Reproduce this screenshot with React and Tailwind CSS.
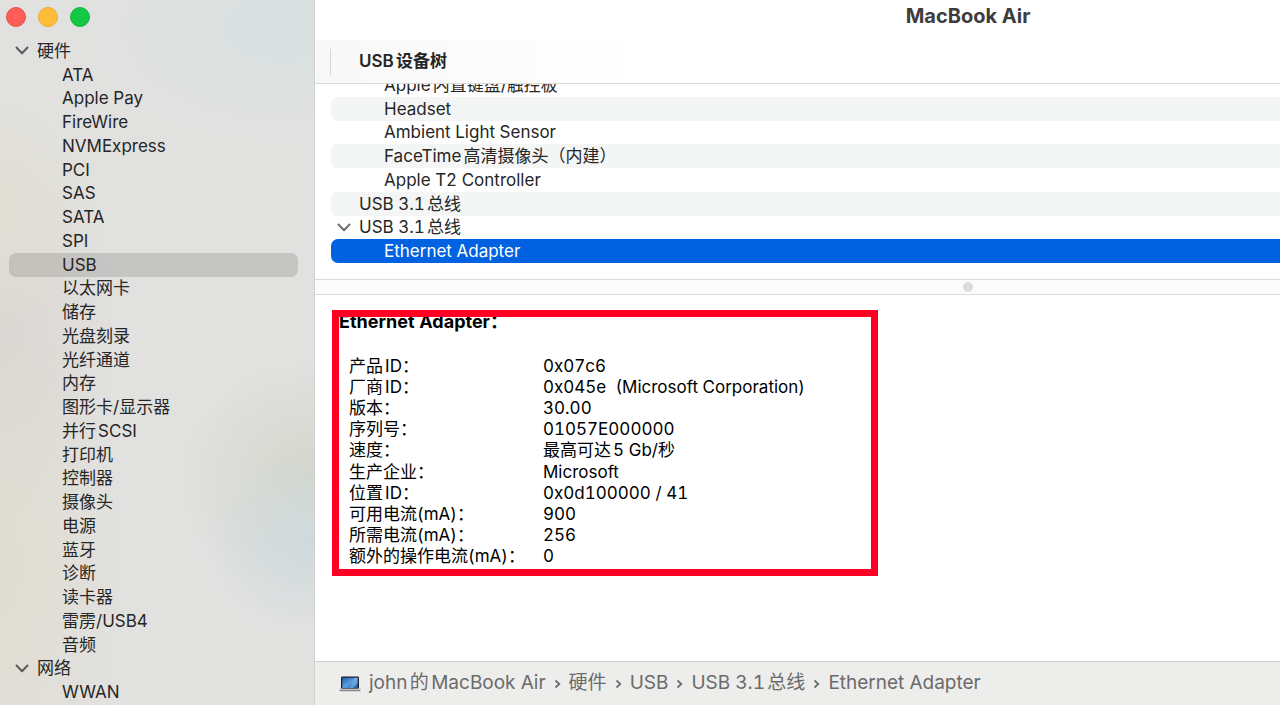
import { useState } from 'react';
import clsx from 'clsx';

const sidebarSections = [
  {
    name: '硬件',
    items: [
      'ATA',
      'Apple Pay',
      'FireWire',
      'NVMExpress',
      'PCI',
      'SAS',
      'SATA',
      'SPI',
      'USB',
      '以太网卡',
      '储存',
      '光盘刻录',
      '光纤通道',
      '内存',
      '图形卡/显示器',
      '并行SCSI',
      '打印机',
      '控制器',
      '摄像头',
      '电源',
      '蓝牙',
      '诊断',
      '读卡器',
      '雷雳/USB4',
      '音频',
    ],
  },
  { name: '网络', items: ['WWAN'] },
];

const devices = [
  { id: 1, name: 'Apple内置键盘/触控板', level: 1 },
  { id: 2, name: 'Headset', level: 1 },
  { id: 3, name: 'Ambient Light Sensor', level: 1 },
  { id: 4, name: 'FaceTime高清摄像头（内建）', level: 1 },
  { id: 5, name: 'Apple T2 Controller', level: 1 },
  { id: 6, name: 'USB 3.1总线', level: 0 },
  { id: 7, name: 'USB 3.1总线', level: 0, expanded: true },
  { id: 8, name: 'Ethernet Adapter', level: 1 },
];

const details = [
  ['产品ID：', '0x07c6'],
  ['厂商ID：', '0x045e  (Microsoft Corporation)'],
  ['版本：', '30.00'],
  ['序列号：', '01057E000000'],
  ['速度：', '最高可达5 Gb/秒'],
  ['生产企业：', 'Microsoft'],
  ['位置ID：', '0x0d100000 / 41'],
  ['可用电流(mA)：', '900'],
  ['所需电流(mA)：', '256'],
  ['额外的操作电流(mA)：', '0'],
];

const breadcrumb = ['john的MacBook Air', '硬件', 'USB', 'USB 3.1总线', 'Ethernet Adapter'];

const Chevron = ({ className }) => (
  <svg viewBox="0 0 14 9" fill="none" className={clsx('h-[9px] w-[14px] shrink-0', className)}>
    <path d="M1.500 1.500 7 7.200l5.500-5.700" stroke="currentColor" strokeWidth="2" strokeLinecap="round" strokeLinejoin="round" />
  </svg>
);

const LaptopIcon = () => (
  <svg viewBox="0 0 22 16" className="h-4 w-[22px] shrink-0">
    <defs>
      <linearGradient id="screen" x1="0" y1="0" x2="1" y2="1">
        <stop offset="0" stopColor="#1d5fae" />
        <stop offset="0.5" stopColor="#5b9fdc" />
        <stop offset="1" stopColor="#1c58a4" />
      </linearGradient>
    </defs>
    <rect x="2" y="0.500" width="18" height="12.500" rx="1.200" fill="#1b2530" />
    <rect x="3.300" y="1.800" width="15.400" height="10.200" fill="url(#screen)" />
    <path d="M11 12 15.500 1.800h3.200V7L14 12Z" fill="#8fc3ee" opacity="0.450" />
    <path d="M0 12.800h22v1.200q-.6 1.200-2 1.200H2Q.6 15.200 0 14Z" fill="#a9adb1" />
    <path d="M0 12.800h22v.8H0Z" fill="#d8dadc" />
    <path d="M1 14.600h20" stroke="#6d7073" strokeWidth="0.700" />
  </svg>
);

const Sidebar = ({ selected, onSelect }) => (
  <aside className="flex w-[315px] shrink-0 flex-col border-r border-[#d2d2d1] bg-[#e1e1e0] bg-[radial-gradient(ellipse_190px_110px_at_90%_4%,#d8e0e0_0%,transparent_100%),radial-gradient(ellipse_110px_90px_at_100%_77%,#cfdadd_0%,transparent_100%),radial-gradient(ellipse_130px_120px_at_98%_68%,#d3d6cc_0%,transparent_100%),radial-gradient(ellipse_110px_130px_at_0%_29%,#e1dfd4_0%,transparent_100%),radial-gradient(ellipse_120px_200px_at_0%_46%,#dbd6d2_0%,transparent_100%),radial-gradient(ellipse_130px_300px_at_0%_80%,#e0dccf_0%,transparent_100%)] pb-px">
    <div className="flex h-[39px] gap-3 px-1.5 pt-[7px]">
      <button aria-label="关闭" className="size-5 rounded-full border border-[#e8514a] bg-[#fe5e57]" />
      <button aria-label="最小化" className="size-5 rounded-full border border-[#eaab36] bg-[#febc39]" />
      <button aria-label="缩放" className="size-5 rounded-full border border-[#14b83c] bg-[#13c845]" />
    </div>
    <nav className="grid flex-1 auto-rows-fr pr-4 pl-[9px]">
      {sidebarSections.map((section) => [
        <button key={section.name} className="flex items-center gap-2 pl-1.5 leading-5">
          <Chevron className="text-[#5a5a5a]" />
          {section.name}
        </button>,
        ...section.items.map((item) => (
          <button
            key={item}
            onClick={() => onSelect(item)}
            className={clsx('rounded-[7px] pl-[53px] text-left leading-5', item === selected && 'bg-black/12')}
          >
            {item}
          </button>
        )),
      ])}
    </nav>
  </aside>
);

const DeviceTree = ({ selected, onSelect }) => (
  <div className="flex h-[195px] shrink-0 flex-col justify-end overflow-hidden pb-4 pl-4 tabular-nums">
    <div className="grid h-[190px] shrink-0 auto-rows-fr">
      {devices.map((device, i) => (
        <button
          key={device.id}
          onClick={() => onSelect(device.id)}
          className={clsx(
            'flex items-center rounded-l-[7px] leading-5',
            device.level === 1 ? 'pl-[53px]' : 'pl-1.5',
            device.id === selected ? 'bg-[#0062e0] text-white' : i % 2 === 1 && 'bg-[#f4f5f5]'
          )}
        >
          {device.level === 0 && (
            <span className="flex w-[22px]">{device.expanded && <Chevron className="text-[#6e6e6e]" />}</span>
          )}
          {device.name}
        </button>
      ))}
    </div>
  </div>
);

const DeviceDetails = () => (
  <section className="flex-1 px-[17px] pt-[15px]">
    <div className="relative w-[546px] px-[7px] pb-[9px] text-black tabular-nums">
      <h2 className="text-lg font-bold leading-6">Ethernet Adapter：</h2>
      <table className="mt-[21px] h-[212px] w-full">
        <tbody>
          {details.map(([label, value]) => (
            <tr key={label}>
              <th scope="row" className="w-[204px] p-0 pl-2.5 text-left font-normal leading-5">{label}</th>
              <td className="whitespace-pre p-0 leading-5">{value}</td>
            </tr>
          ))}
        </tbody>
      </table>
      {/* highlight frame lies over the text */}
      <div className="pointer-events-none absolute inset-0 border-[7px] border-[#fe0023]" />
    </div>
  </section>
);

const PathBar = () => (
  <footer className="flex h-11 shrink-0 items-center gap-2 border-t border-[#cfcfcd] bg-[#ededec] pl-6 text-[19px] text-[#6b6b6b] tabular-nums">
    <LaptopIcon />
    <ol className="flex items-center gap-2">
      {breadcrumb.map((crumb, i) => (
        <li key={crumb} className="flex items-center gap-2">
          {i > 0 && (
            <svg viewBox="0 0 7 10" fill="none" className="h-2.5 w-[7px]">
              <path d="m1.500 1.500 3.800 3.500-3.800 3.500" stroke="currentColor" strokeWidth="1.700" />
            </svg>
          )}
          <button>{crumb}</button>
        </li>
      ))}
    </ol>
  </footer>
);

const App = () => {
  const [category, setCategory] = useState('USB');
  const [device, setDevice] = useState(8);

  return (
    <div
      lang="zh-CN"
      className="flex min-h-screen overflow-hidden bg-white font-['Inter','Noto_Sans_CJK_SC',sans-serif] text-[17px] text-[#262626] [text-autospace:normal]"
    >
      <Sidebar selected={category} onSelect={setCategory} />
      <main className="flex min-w-[1306px] flex-1 flex-col">
        <h1 className="pt-1 text-center text-xl font-bold leading-6 text-[#3d3d3d]">MacBook Air</h1>
        <div className="mt-3 flex h-11 shrink-0 items-center border-b border-[#dadada] bg-linear-to-r from-[#f8f8f8] to-white to-25% pl-[15px]">
          <div className="h-[26px] w-px bg-[#d6d6d6]" />
          <h2 className="pl-7 font-semibold">USB设备树</h2>
        </div>
        <DeviceTree selected={device} onSelect={setDevice} />
        <div className="flex h-4 shrink-0 items-center justify-center border-y border-[#dcdcdc] bg-[#fbfbfb]">
          <div className="size-2.5 rounded-full bg-[#dcdcdc]" />
        </div>
        <DeviceDetails />
        <PathBar />
      </main>
    </div>
  );
};

export default App;
